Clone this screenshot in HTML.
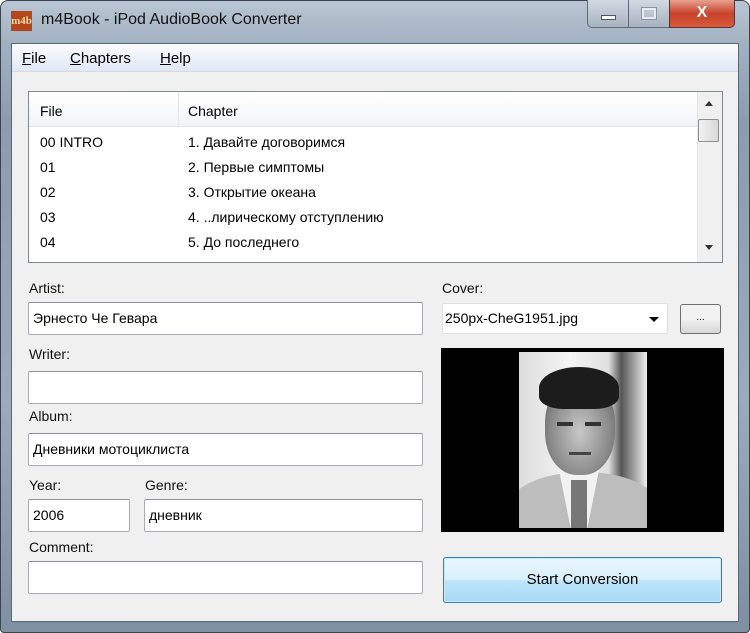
<!DOCTYPE html>
<html><head><meta charset="utf-8"><style>
*{box-sizing:border-box;margin:0;padding:0}
body{width:750px;height:633px;overflow:hidden;background:#fff;font-family:"Liberation Sans","DejaVu Sans",sans-serif;font-size:14px;color:#000;position:relative}
.a{position:absolute}
.frame{left:0;top:0;width:750px;height:633px;border-radius:8px 8px 4px 4px;background:linear-gradient(180deg,#b9c6d3 0,#a3b2c2 40px,#8c9caf 120px,#9aabbd 400px,#7f8fa2 633px);border:1px solid #3a4450}
.client{left:11px;top:43px;width:728px;height:579px;background:#f0f0f0;border:1px solid #5a6878}
.menu{left:0;top:0;width:726px;height:28px;background:linear-gradient(#fbfcfe,#dfe8f4);border-bottom:1px solid #d4dbe5}
.menu span{position:absolute;top:6px;font-size:15px}
.tb{border:1px solid #abadb3;border-top-color:#8e9096;background:#fff;border-radius:2px}
.lbl{font-size:14px;color:#111}
.txt{position:absolute;left:4px;top:7px;font-size:14px}
</style></head><body>
<div class="a frame"></div>
<div class="a" style="left:11px;top:11px;width:21px;height:20px;background:#b5461a;color:#f5d9a8;font-size:11px;font-weight:bold;font-family:'Liberation Serif',serif;line-height:20px;text-align:center">m4b</div>
<div class="a" style="left:41px;top:11px;font-size:16px;color:#111">m4Book - iPod AudioBook Converter</div>
<div class="a" style="left:587px;top:0;width:42px;height:28px;border:1px solid #5d6a79;border-top:none;border-radius:0 0 0 5px;background:linear-gradient(#d2d9e2,#a8b3c0)"><div class="a" style="left:13px;top:15px;width:15px;height:5px;background:#fff;border:1px solid #4b5563"></div></div>
<div class="a" style="left:629px;top:0;width:40px;height:28px;border-bottom:1px solid #5d6a79;background:linear-gradient(#d2d9e2,#a8b3c0)"><div class="a" style="left:13px;top:8px;width:14px;height:11px;border:2px solid #e8ecf0;outline:1px solid #8a95a3"></div></div>
<div class="a" style="left:669px;top:0;width:66px;height:28px;border:1px solid #5d3030;border-top:none;border-radius:0 0 5px 0;background:linear-gradient(#e8a090,#c8432c 50%,#d85a3c);color:#fff;font-weight:bold;font-size:16px;text-align:center;line-height:26px">X</div>
<div class="a client">
 <div class="a menu"><span style="left:10px"><u>F</u>ile</span><span style="left:58px"><u>C</u>hapters</span><span style="left:148px"><u>H</u>elp</span></div>
 <div class="a" style="left:16px;top:47px;width:695px;height:172px;background:#fff;border:1px solid #828790">
  <div class="a" style="left:0;top:0;width:668px;height:35px;background:linear-gradient(#fff,#f3f4f6);border-bottom:1px solid #e3e5e8"></div>
  <div class="a" style="left:149px;top:0;width:1px;height:35px;background:#e3e5e8"></div>
  <div class="a" style="left:11px;top:11px">File</div><div class="a" style="left:159px;top:11px">Chapter</div>
  <div class="a" style="left:11px;top:38px;line-height:25px">00 INTRO<br>01<br>02<br>03<br>04</div>
  <div class="a" style="left:159px;top:38px;line-height:25px">1. Давайте договоримся<br>2. Первые симптомы<br>3. Открытие океана<br>4. ..лирическому отступлению<br>5. До последнего</div>
  <div class="a" style="left:668px;top:0;width:25px;height:170px;background:#f0f0f0;border-left:1px solid #e6e6e6"></div>
  <div class="a" style="left:676px;top:9px;width:0;height:0;border:4px solid transparent;border-bottom:5px solid #333;border-top:none"></div>
  <div class="a" style="left:676px;top:153px;width:0;height:0;border:4px solid transparent;border-top:5px solid #333;border-bottom:none"></div>
  <div class="a" style="left:669px;top:27px;width:21px;height:23px;border:1px solid #8f8f8f;border-radius:2px;background:linear-gradient(90deg,#f2f2f2,#d8d8d8)"></div>
 </div>
 <div class="a lbl" style="left:17px;top:236px">Artist:</div>
 <div class="a tb" style="left:16px;top:258px;width:395px;height:33px"><span class="txt">Эрнесто Че Гевара</span></div>
 <div class="a lbl" style="left:17px;top:302px">Writer:</div>
 <div class="a tb" style="left:16px;top:327px;width:395px;height:33px"></div>
 <div class="a lbl" style="left:17px;top:364px">Album:</div>
 <div class="a tb" style="left:16px;top:389px;width:395px;height:33px"><span class="txt">Дневники мотоциклиста</span></div>
 <div class="a lbl" style="left:17px;top:433px">Year:</div>
 <div class="a tb" style="left:16px;top:455px;width:102px;height:33px"><span class="txt">2006</span></div>
 <div class="a lbl" style="left:133px;top:433px">Genre:</div>
 <div class="a tb" style="left:132px;top:455px;width:279px;height:33px"><span class="txt">дневник</span></div>
 <div class="a lbl" style="left:17px;top:495px">Comment:</div>
 <div class="a tb" style="left:16px;top:517px;width:395px;height:33px"></div>
 <div class="a lbl" style="left:430px;top:236px">Cover:</div>
 <div class="a tb" style="left:430px;top:259px;width:226px;height:31px;border-color:#e0e0e0"><span class="txt" style="left:2px;top:6px">250px-CheG1951.jpg</span><div class="a" style="left:206px;top:13px;border:5px solid transparent;border-top:5px solid #000;border-bottom:none"></div></div>
 <div class="a" style="left:668px;top:260px;width:41px;height:30px;border:1px solid #707070;border-radius:3px;background:linear-gradient(#f2f2f2 50%,#d6d6d6);text-align:center;font-size:10px;line-height:26px">...</div>
 <div class="a" style="left:429px;top:304px;width:283px;height:184px;background:#000">
  <div class="a" style="left:78px;top:4px;width:128px;height:176px;overflow:hidden;background:linear-gradient(90deg,#ddd,#f4f4f4 40%,#e0e0e0 70%,#555 80%,#eee)">
   <div class="a" style="left:-10px;top:120px;width:150px;height:70px;border-radius:50% 50% 0 0;background:#bdbdbd"></div>
   <div class="a" style="left:40px;top:118px;width:40px;height:60px;background:#f2f2f2;clip-path:polygon(0 0,100% 0,70% 100%,30% 100%)"></div>
   <div class="a" style="left:52px;top:128px;width:16px;height:50px;background:#777"></div>
   <div class="a" style="left:26px;top:28px;width:70px;height:95px;border-radius:45%;background:radial-gradient(ellipse at 50% 55%,#c8c8c8,#8a8a8a 60%,#555)"></div>
   <div class="a" style="left:20px;top:15px;width:80px;height:42px;border-radius:50% 50% 30% 30%;background:#1c1c1c"></div>
   <div class="a" style="left:38px;top:70px;width:16px;height:4px;background:#333"></div>
   <div class="a" style="left:66px;top:70px;width:16px;height:4px;background:#333"></div>
   <div class="a" style="left:50px;top:100px;width:22px;height:3px;background:#444"></div>
  </div>
 </div>
 <div class="a" style="left:431px;top:513px;width:279px;height:46px;border:1px solid #3c7fb1;border-radius:3px;background:linear-gradient(#eaf6fd,#d9f0fc 50%,#bee6fd 51%,#a7d9f5);box-shadow:inset 0 0 0 1px #c6e8fb;text-align:center;line-height:44px;font-size:15px">Start Conversion</div>
</div>
</body></html>
